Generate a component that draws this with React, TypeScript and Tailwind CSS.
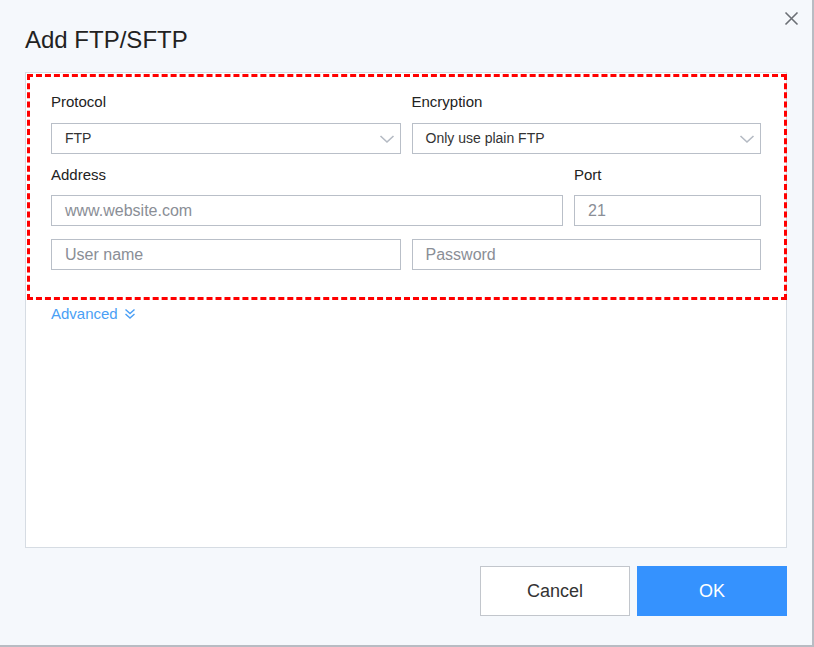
import React from "react";

// Add FTP/SFTP dialog

function Chevron() {
  return (
    <svg width="16" height="10" viewBox="0 0 16 10" className="shrink-0">
      <polyline points="1.5,2 8,8 14.5,2" fill="none" stroke="#b4bac3" strokeWidth="1.6" />
    </svg>
  );
}

function SelectBox({ value }: { value: string }) {
  return (
    <div className="h-[31px] border border-[#b9bfc8] bg-white flex items-center justify-between pl-[13px] pr-[5px]">
      <span className="text-[14px] text-[#333]">{value}</span>
      <Chevron />
    </div>
  );
}

function InputBox({ placeholder }: { placeholder: string }) {
  return (
    <div className="h-[31px] border border-[#b9bfc8] bg-white flex items-center pl-[13px]">
      <span className="text-[16px] text-[#8a8e96]">{placeholder}</span>
    </div>
  );
}

export default function App() {
  return (
    <div
      className="w-[814px] h-[647px] bg-[#f5f8fc] border-r-2 border-b-2 border-[#b8bcc3] relative"
      style={{ fontFamily: '"Liberation Sans", Arial, sans-serif' }}
    >
      <button className="absolute left-[783px] top-[10px] w-[16px] h-[16px] flex items-center justify-center">
        <svg width="15" height="15" viewBox="0 0 15 15">
          <path d="M1.5 1.5 L13.5 13.5 M13.5 1.5 L1.5 13.5" stroke="#6b6f75" strokeWidth="1.6" fill="none" />
        </svg>
      </button>

      <div className="pl-[25px] pr-[25px] pt-[26px]">
        <h1 className="text-[24px] leading-[28px] text-[#222]">Add FTP/SFTP</h1>

        <div className="mt-[18px] h-[476px] border border-[#d6dce3] bg-white">
          <div className="ml-px -mr-px mt-px border-[3px] border-dashed border-[#ff0000] pl-[21px] pr-[23px] pt-[15px] pb-[27px]">
            <div className="grid grid-cols-2 gap-x-[11px]">
              <div>
                <div className="text-[15px] leading-[20px] text-[#222] mb-[11px]">Protocol</div>
                <SelectBox value="FTP" />
              </div>
              <div>
                <div className="text-[15px] leading-[20px] text-[#222] mb-[11px]">Encryption</div>
                <SelectBox value="Only use plain FTP" />
              </div>
            </div>

            <div className="flex gap-[11px] mt-[11px]">
              <div className="flex-1">
                <div className="text-[15px] leading-[20px] text-[#222] mb-[10px]">Address</div>
                <InputBox placeholder="www.website.com" />
              </div>
              <div className="w-[187px]">
                <div className="text-[15px] leading-[20px] text-[#222] mb-[10px]">Port</div>
                <InputBox placeholder="21" />
              </div>
            </div>

            <div className="grid grid-cols-2 gap-x-[11px] mt-[13px]">
              <InputBox placeholder="User name" />
              <InputBox placeholder="Password" />
            </div>
          </div>

          <div className="pl-[25px] mt-[4px] flex items-center gap-[6px] text-[15px] leading-[20px] text-[#4a9ff5]">
            <span>Advanced</span>
            <svg width="12" height="12" viewBox="0 0 12 12">
              <path d="M1.5 1.5 L6 5.5 L10.5 1.5 M1.5 6 L6 10 L10.5 6" stroke="#4a9ff5" strokeWidth="1.4" fill="none" />
            </svg>
          </div>
        </div>

        <div className="flex justify-end gap-[7px] mt-[18px]">
          <button className="w-[150px] h-[50px] border border-[#c2c6cc] bg-white text-[18px] text-[#333]">
            Cancel
          </button>
          <button className="w-[150px] h-[50px] bg-[#3592fe] text-[18px] text-white">OK</button>
        </div>
      </div>
    </div>
  );
}
